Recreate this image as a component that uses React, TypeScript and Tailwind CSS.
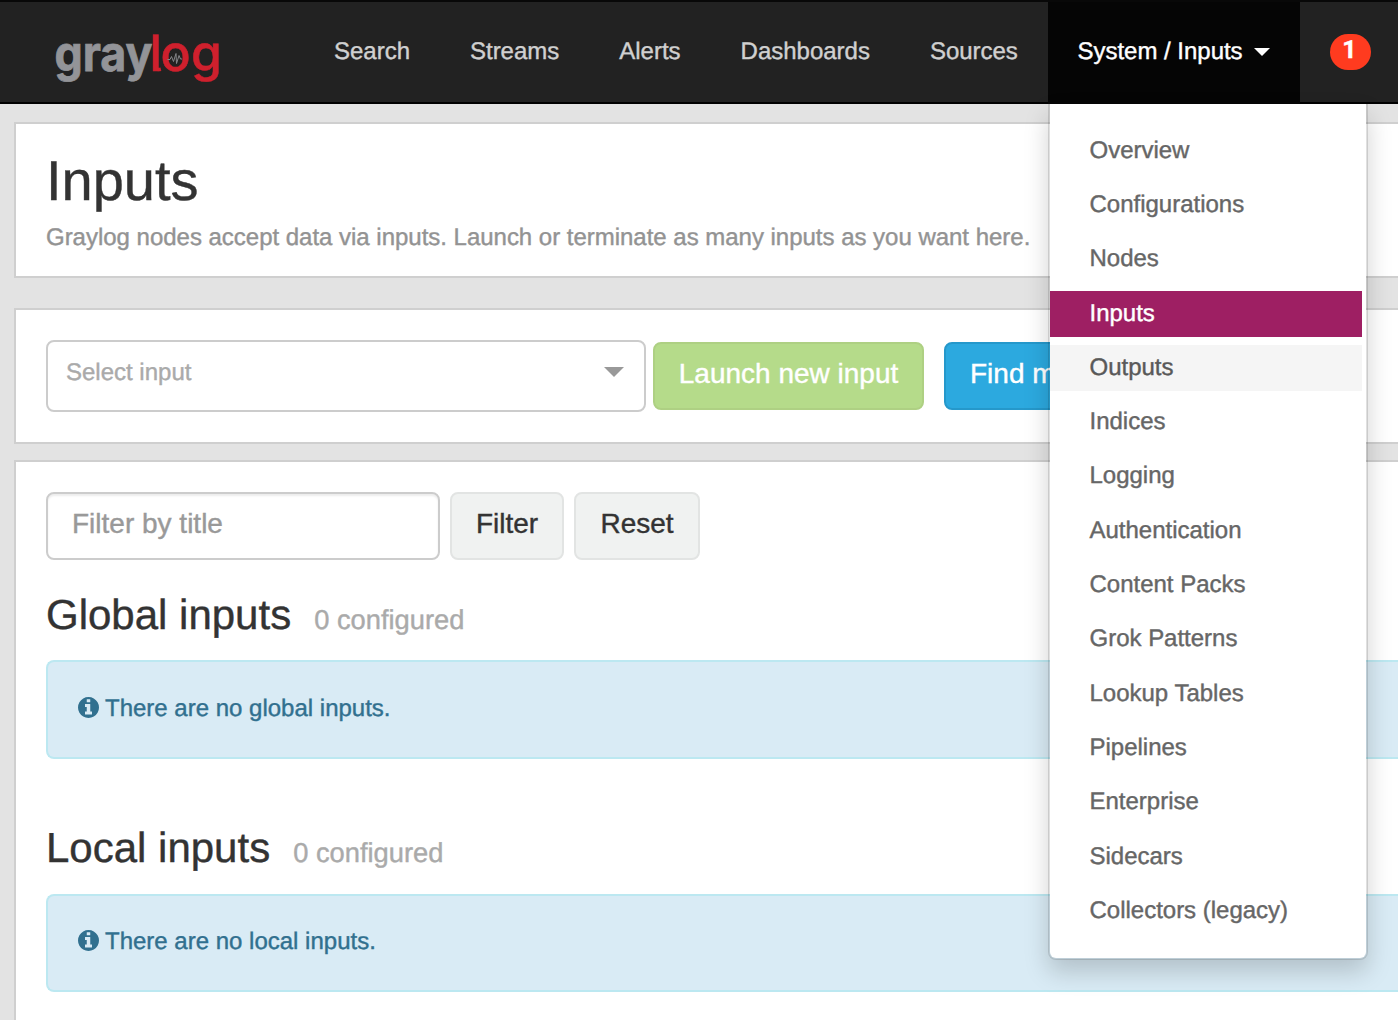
import type { ReactNode } from "react";

const NAV = ["Search", "Streams", "Alerts", "Dashboards", "Sources"];

const MENU = [
  "Overview",
  "Configurations",
  "Nodes",
  "Inputs",
  "Outputs",
  "Indices",
  "Logging",
  "Authentication",
  "Content Packs",
  "Grok Patterns",
  "Lookup Tables",
  "Pipelines",
  "Enterprise",
  "Sidecars",
  "Collectors (legacy)",
];

function Logo() {
  return (
    <svg width="175" height="64" viewBox="0 0 175 64" overflow="visible" className="font-[Inter]" aria-label="graylog">
      <text
        x="-0.500"
        y="41"
        fill="#939498"
        stroke="#939498"
        strokeWidth="0.800"
        fontSize="49"
        fontWeight="700"
        textLength="98"
        lengthAdjust="spacingAndGlyphs"
      >
        gray
      </text>
      <g fill="#cf202d" stroke="#cf202d" strokeWidth="0.500" fontSize="50" fontWeight="500">
        <text x="94.500" y="41">l</text>
        <text x="105.500" y="41">o</text>
        <text x="136" y="41">g</text>
      </g>
      <path d="M100.300 36q-0.200 4.600 5.600 3.200" fill="none" stroke="#cf202d" strokeWidth="3.500" />
      <path
        d="M112.500 29.500h2.500l1.500-3 2 5 2.500-8 0.500 10 2.500-8 1.500 3.500h1.500"
        fill="none"
        stroke="#85868a"
        strokeWidth="1"
      />
    </svg>
  );
}

function InfoIcon({ className }: { className: string }) {
  return (
    <svg viewBox="128 128 1536 1536" fill="currentColor" className={className} aria-hidden="true">
      <path d="M1152 1376v-160q0-14-9-23t-23-9h-96v-512q0-14-9-23t-23-9h-320q-14 0-23 9t-9 23v160q0 14 9 23t23 9h96v320h-96q-14 0-23 9t-9 23v160q0 14 9 23t23 9h448q14 0 23-9t9-23zM1024 480v-160q0-14-9-23t-23-9h-192q-14 0-23 9t-9 23v160q0 14 9 23t23 9h192q14 0 23-9t9-23zM1664 896q0 209-103 385.5t-279.5 279.5-385.5 103-385.5-103-279.5-279.5-103-385.5 103-385.5 279.5-279.5 385.5-103 385.5 103 279.5 279.5 103 385.5z" />
    </svg>
  );
}

function Menu() {
  return (
    <ul className="absolute top-[104px] left-0 z-10 w-[320px] rounded-b-lg border-2 border-t-0 border-black/12 bg-white bg-clip-padding pt-[23.690px] pb-[16px] shadow-[0_12px_24px_rgba(0,0,0,0.175)]">
      {MENU.map((item) => (
        <li
          key={item}
          className={
            "mb-2 h-[46.297px] w-[312px] pl-[39.500px] text-[24px] leading-[46px] tracking-[-0.010px] whitespace-nowrap " +
            (item === "Inputs"
              ? "bg-[#9e1f63] text-white"
              : item === "Outputs"
                ? "bg-[#f5f5f5] text-[#595959]"
                : "text-[#666666]")
          }
        >
          {item}
        </li>
      ))}
    </ul>
  );
}

function Header() {
  return (
    <header className="flex h-[104px] border-t-2 border-b-2 border-t-[#080808] border-b-black bg-[#222222] text-[24px] leading-[100px] text-[#d0d0d0]">
      <div className="w-[304px] shrink-0 pt-[28px] pl-[55px]">
        <Logo />
      </div>
      <nav className="flex w-[744px] shrink-0">
        {NAV.map((item) => (
          <a key={item} className="block px-[30px] tracking-[-0.010px] whitespace-nowrap">
            {item}
          </a>
        ))}
      </nav>
      <div className="relative -mt-0.5 flex h-[104px] w-[252px] shrink-0 items-start border-t-2 border-t-[#080808] bg-[#050505] pl-[29.500px] text-white">
        <span className="tracking-[-0.020px] whitespace-nowrap">System / Inputs</span>
        <span className="mt-[46px] ml-[11.500px] h-0 w-0 border-x-8 border-t-8 border-x-transparent border-t-white" />
        <div className="absolute -top-0.5 left-0">
          <Menu />
        </div>
      </div>
      <div className="pt-8 pl-[30px]">
        <div className="h-9 w-[41px] rounded-[18px] bg-[#ff3b1f] pr-0.5 text-center font-[Roboto] text-[25px] font-bold leading-[34px] text-white">
          1
        </div>
      </div>
    </header>
  );
}

function Panel({ className, children }: { className: string; children: ReactNode }) {
  return (
    <section className={"ml-[14px] border-2 border-r-0 border-[#cfcfcf] bg-white pl-[30px] " + className}>
      {children}
    </section>
  );
}

type InputGroupProps = {
  title: string;
  message: string;
  className: string;
  alertClass: string;
  iconClass: string;
};

function InputGroup({ title, message, className, alertClass, iconClass }: InputGroupProps) {
  return (
    <div className={className}>
      <h2 className="flex h-[50px] items-baseline text-[42px] leading-[50px] text-[#333333]">
        {title}
        <small className="ml-[23px] text-[27.300px] leading-none text-[#aaaaaa]">0 configured</small>
      </h2>
      <div
        className={
          "flex rounded-l-lg border-2 border-r-0 border-[#bce8f1] bg-[#d9ebf5] pl-[30px] text-[24px] text-[#31708f] " +
          alertClass
        }
      >
        <InfoIcon className={"mr-[6px] size-[21px] " + iconClass} />
        {message}
      </div>
    </div>
  );
}

export default function App() {
  return (
    <div className="h-[1020px] w-[1398px] overflow-hidden bg-[#e3e3e3] font-['Liberation_Sans',Arial,sans-serif] [-webkit-text-stroke-width:0.400px] [text-rendering:geometricPrecision]">
      <Header />
      <Panel className="mt-[18px] h-[156px] pt-[26px]">
        <h1 className="h-[62px] text-[56px] leading-[62px] text-[#333333]">Inputs</h1>
        <p className="mt-[10px] text-[24px] leading-[32px] tracking-[-0.018px] text-[#939393]">
          Graylog nodes accept data via inputs. Launch or terminate as many inputs as you want here.
        </p>
      </Panel>
      <Panel className="mt-[30px] flex h-[136px] pt-[30px]">
        <div className="flex h-[72px] w-[600px] justify-between rounded-lg border-2 border-[#cccccc] pr-5 pl-[18px] text-[24px] leading-[62px] text-[#aaaaaa]">
          Select input
          <span className="mt-[25px] h-0 w-0 border-x-10 border-t-10 border-x-transparent border-t-[#999999]" />
        </div>
        <button className="mt-0.5 ml-[7px] h-[68px] w-[271px] rounded-lg border-2 border-[#aed083] bg-[#b5db8a] pb-[5px] text-[28px] leading-[58px] whitespace-nowrap text-white">
          Launch new input
        </button>
        <button className="mt-0.5 ml-5 h-[68px] w-[280px] shrink-0 rounded-lg border-2 border-[#2598cb] bg-[#2ca9df] pb-[5px] pl-6 text-left text-[28px] leading-[58px] whitespace-nowrap text-white">
          Find more inputs
        </button>
      </Panel>
      <Panel className="mt-4 h-[580px] pt-[30px]">
        <div className="flex gap-[10px] text-[28px] text-[#333333]">
          <input
            placeholder="Filter by title"
            className="h-[68px] w-[394px] rounded-lg border-2 border-[#cccccc] px-6 pb-[5px] shadow-[inset_0_2px_2px_rgba(0,0,0,0.075)] placeholder:text-[#999999]"
          />
          <button className="h-[68px] w-[114px] rounded-lg border-2 border-[#e2e4e3] bg-[#f0f2f1] pb-[5px]">Filter</button>
          <button className="h-[68px] w-[126px] rounded-lg border-2 border-[#e2e4e3] bg-[#f0f2f1] pb-[5px]">Reset</button>
        </div>
        <InputGroup
          className="mt-[30px]"
          title="Global inputs"
          message="There are no global inputs."
          alertClass="mt-[20px] h-[99px] leading-[94px]"
          iconClass="mt-[34.500px]"
        />
        <InputGroup
          className="mt-[64px]"
          title="Local inputs"
          message="There are no local inputs."
          alertClass="mt-[21px] h-[98px] leading-[92px]"
          iconClass="mt-[33.500px]"
        />
      </Panel>
    </div>
  );
}
